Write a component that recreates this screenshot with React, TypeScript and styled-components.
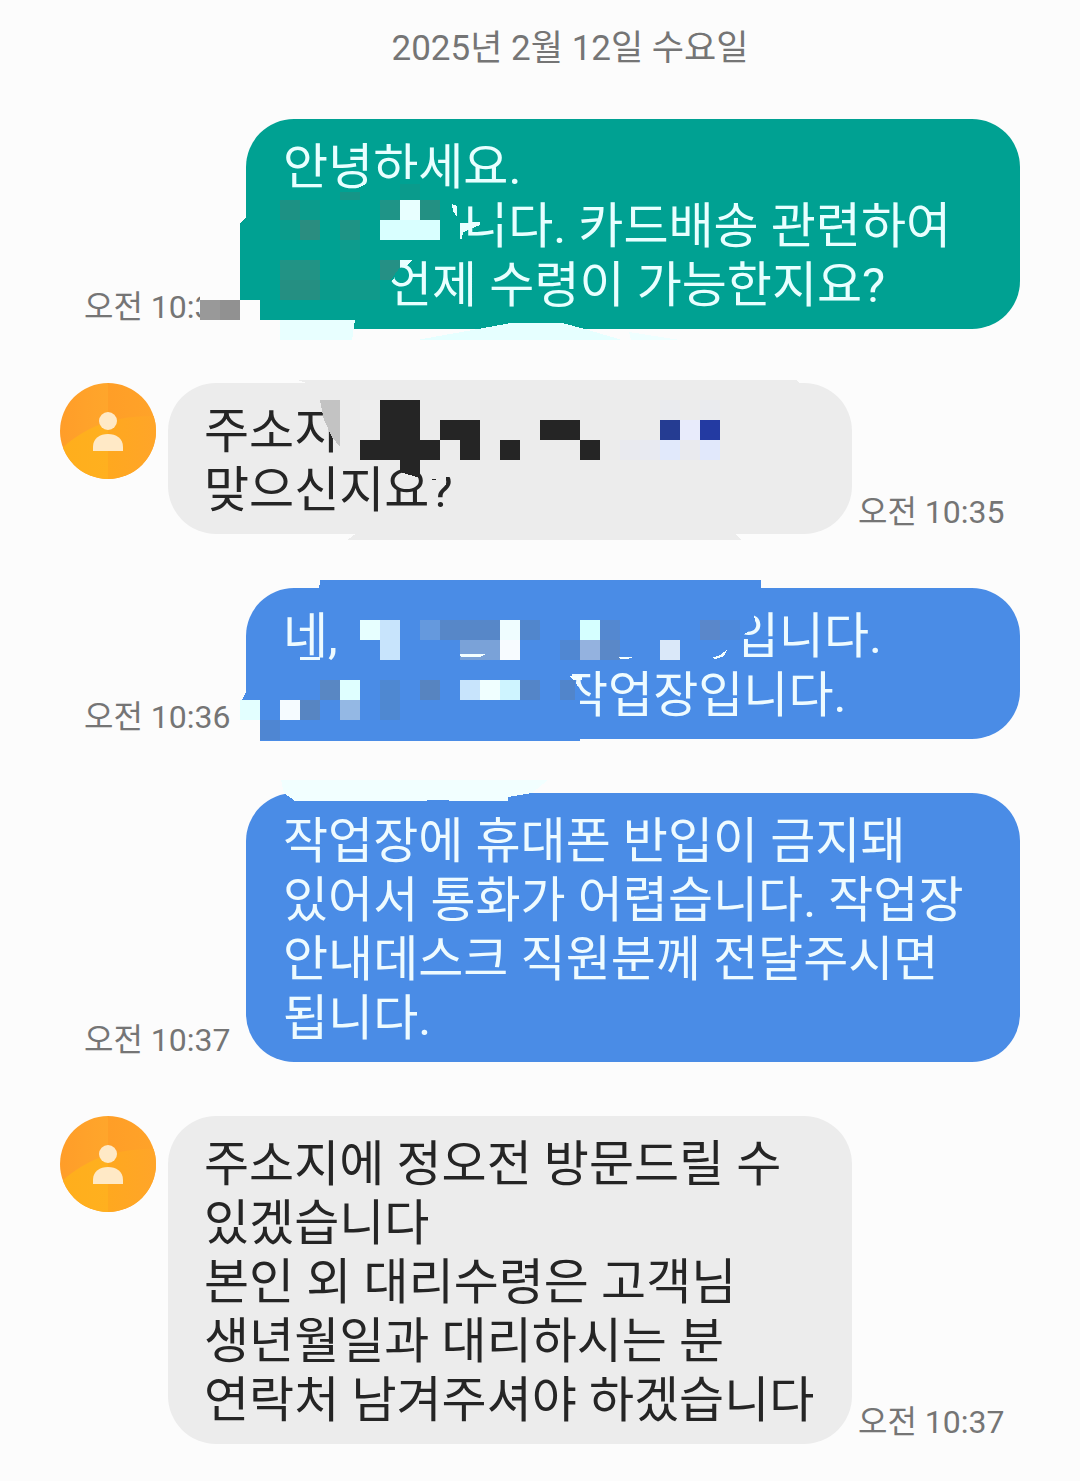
import React from "react";
import styled, { createGlobalStyle } from "styled-components";

const GlobalStyle = createGlobalStyle`
  *, *::before, *::after { box-sizing: border-box; }
  body {
    margin: 0;
    background: #fcfcfc;
    font-family: Roboto, "Noto Sans CJK KR", sans-serif;
  }
`;

type Tone = "teal" | "blue" | "gray";
const tones: Record<Tone, { fill: string; ink: string }> = {
  teal: { fill: "#00a192", ink: "#e8ffff" },
  blue: { fill: "#4a8ce6", ink: "#eefbff" },
  gray: { fill: "#ececec", ink: "#252525" },
};
const PAGE = "#fcfcfc";

const Chat = styled.main`
  padding: 25px 60px 38px;
`;

const DateHeading = styled.h1`
  margin: 0 0 46px;
  padding-left: 60px;
  color: #757575;
  font-size: 35px;
  font-weight: 400;
  line-height: 48px;
  text-align: center;
`;

const Thread = styled.ol`
  display: flex;
  flex-direction: column;
  gap: 54px;
  margin: 0;
  padding: 0;
  list-style: none;
`;

const Row = styled.li<{ $outgoing: boolean }>`
  display: flex;
  align-items: flex-end;
  flex-direction: ${(p) => (p.$outgoing ? "row-reverse" : "row")};
  gap: ${(p) => (p.$outgoing ? 12 : 6)}px;
  padding: ${(p) => (p.$outgoing ? "0 0 0 24px" : "0 12px 0 0")};
`;

const AvatarIcon = styled.svg`
  flex: none;
  align-self: flex-start;
  width: 96px;
  height: 96px;
  margin-right: 6px;
`;

const Bubble = styled.div<{ $tone: Tone }>`
  position: relative;
  flex: 1;
  min-width: 0;
  padding: 19px 36px 14px ${(p) => (p.$tone === "gray" ? 36 : 37)}px;
  border-radius: 48px;
  background: ${(p) => tones[p.$tone].fill};
  color: ${(p) => tones[p.$tone].ink};
`;

const Line = styled.p`
  margin: 0;
  font-size: 49px;
  font-weight: 400;
  line-height: 59px;
  white-space: nowrap;
`;

const Redacted = styled.span<{ $width: number }>`
  display: inline-block;
  width: ${(p) => p.$width}px;
`;

const Time = styled.time`
  flex: none;
  width: 150px;
  padding-bottom: 2px;
  color: #757575;
  font-size: 32px;
  line-height: 40px;
  white-space: nowrap;
`;

const MosaicLayer = styled.svg`
  position: absolute;
  top: 0;
  left: 0;
  overflow: visible;
  pointer-events: none;
`;

/* x, y, width, height, colour */
type Cell = [number, number, number, number, string];
const Cells = ({ items }: { items: Cell[] }) => (
  <>
    {items.map(([x, y, w, h, fill], i) => (
      <rect key={i} x={x} y={y} width={w} height={h} fill={fill} />
    ))}
  </>
);

const Mosaic = ({ box, children }: { box: [number, number, number, number]; children: React.ReactNode }) => (
  <MosaicLayer viewBox={box.join(" ")} width={box[2]} height={box[3]} shapeRendering="crispEdges" aria-hidden="true">
    {children}
  </MosaicLayer>
);

const Avatar = ({ id }: { id: string }) => (
  <AvatarIcon viewBox="0 0 96 96" role="img" aria-label="상대방">
    <defs>
      <linearGradient id={`${id}-top`} x1="0" x2="1">
        <stop offset="0" stopColor="#ff9d29" />
        <stop offset="0.5" stopColor="#ffa62b" />
        <stop offset="0.5" stopColor="#ff9e27" />
        <stop offset="1" stopColor="#ffa329" />
      </linearGradient>
      <linearGradient id={`${id}-low`} x1="0" x2="1">
        <stop offset="0" stopColor="#ffae1c" />
        <stop offset="0.5" stopColor="#ffb01f" />
        <stop offset="0.5" stopColor="#ffa81f" />
        <stop offset="1" stopColor="#ffa529" />
      </linearGradient>
      <clipPath id={`${id}-clip`}>
        <circle cx="48" cy="48" r="48" />
      </clipPath>
    </defs>
    <g clipPath={`url(#${id}-clip)`}>
      <rect width="96" height="96" fill={`url(#${id}-top)`} />
      <path d="M0 67 C20 48 48 32 96 33 V96 H0Z" fill={`url(#${id}-low)`} />
    </g>
    <circle cx="48" cy="38" r="9" fill="#ffe9c6" />
    <path d="M33 68 V64 C33 55 40 51 48 51 S63 55 63 64 V68Z" fill="#ffe9c6" />
  </AvatarIcon>
);

const GreetingMosaic = () => {
  const base = tones.teal.fill;
  return (
    <Mosaic box={[246, 119, 774, 210]}>
      <path d="M246 217 L240 224 V300 H260 V320 H300 V217Z" fill={base} />
      <path d="M200 280 H240 V320 H202 L201 306 L200 300Z" fill={PAGE} />
      <path d="M240 300 H260 V320 H355 L353 330 H240Z" fill={PAGE} />
      <path d="M280 320 H355 L352 340 H280Z" fill="#e8ffff" />
      <path d="M352 191 L366 184 L373 179 H411 V193 H352Z" fill={base} />
      <path d="M415 198 H462 V248 H415Z" fill={base} />
      <path d="M384 258 H400 V270 L391 282 H384Z" fill={base} />
      <Cells
        items={[
          [200, 300, 20, 20, "#999999"],
          [220, 300, 20, 20, "#919191"],
          [280, 200, 20, 20, "#1d9184"],
          [300, 200, 20, 20, "#0b9b8c"],
          [280, 220, 20, 20, "#0a9c8c"],
          [300, 220, 20, 20, "#2a8d80"],
          [340, 192, 20, 8, "#159587"],
          [340, 220, 20, 20, "#1e9385"],
          [340, 240, 20, 20, "#0d9c8d"],
          [280, 260, 40, 20, "#229385"],
          [280, 280, 40, 20, "#258f82"],
          [320, 280, 20, 20, "#0a9b8c"],
          [340, 280, 40, 20, "#109a8b"],
          [400, 184, 20, 16, "#0a9b8c"],
          [380, 200, 20, 20, "#1f9487"],
          [400, 200, 20, 20, "#e8ffff"],
          [420, 200, 20, 20, "#239083"],
          [380, 220, 60, 20, "#d9ffff"],
          [495, 218, 8, 6, base],
        ]}
      />
      <path d="M380 260 H400 V267 L391 280 H380Z" fill="#259085" />
      <path d="M400 260 H412 L405 267 H400Z M452 204 L457 206 V217 L453 211Z M460 223 L480 222 V225 L466 231 L463 232 L462 239 H460Z" fill="#e8ffff" />
      <path d="M417 340 L478 329 L511 323 H562 L585 329 L622 340Z" fill="#e6ffff" />
      <path d="M629 332 L680 340 H631Z" fill="#efffff" />
    </Mosaic>
  );
};

const AddressMosaic = () => {
  const base = tones.gray.fill;
  return (
    <Mosaic box={[168, 383, 684, 151]}>
      <path d="M298 380 H797 L799 383 V390 H320 L306 383Z M357 533 L347 540 H742 L734 533Z" fill={base} />
      <path d="M320 400 H340 V447 L332 437 L324 420Z" fill="#c3c3c3" />
      <path d="M428 462 H456 V477 H446 V485 H428Z" fill={base} />
      <rect x="432" y="479" width="4" height="1" fill="#252525" />
      <Cells
        items={[
          [380, 400, 40, 40, "#252525"],
          [360, 440, 80, 20, "#252525"],
          [440, 420, 40, 20, "#252525"],
          [460, 440, 20, 20, "#252525"],
          [500, 440, 20, 20, "#252525"],
          [540, 420, 40, 20, "#252525"],
          [580, 440, 20, 20, "#252525"],
          [360, 400, 20, 20, "#eeeeee"],
          [480, 400, 20, 20, "#ebebeb"],
          [580, 400, 20, 20, "#ebebeb"],
          [660, 400, 20, 20, "#eaebee"],
          [700, 400, 20, 20, "#eaebee"],
          [620, 440, 20, 20, "#e9eaef"],
          [640, 440, 20, 20, "#e8eaf1"],
          [660, 420, 20, 20, "#253c92"],
          [680, 420, 20, 20, "#e8ebfb"],
          [700, 420, 20, 20, "#233aa2"],
          [660, 440, 20, 20, "#e1e9fb"],
          [680, 440, 20, 20, "#e9eaee"],
          [700, 440, 20, 20, "#e1e8fb"],
        ]}
      />
      <path d="M400 460 H420 V478 L400 472Z" fill="#252525" />
    </Mosaic>
  );
};

const WorkplaceMosaic = () => {
  const base = tones.blue.fill;
  return (
    <Mosaic box={[246, 588, 774, 151]}>
      <path d="M320 580 H761 V590 H319Z M246 692 L242 700 H262 V692Z" fill={base} />
      <rect x="240" y="720" width="20" height="21" fill={PAGE} />
      <path d="M260 700 H300 V735 H580 V741 H260Z" fill={base} />
      <path d="M736 610 H753 L755 620 L752 629 L743 635 H736Z" fill={base} />
      <path d="M558 670 H569 L575 680 L580 692 V722 H558Z" fill={base} />
      <Cells
        items={[
          [240, 700, 20, 20, "#e3ffff"],
          [360, 620, 20, 20, "#e7ffff"],
          [380, 620, 20, 40, "#c8e4fc"],
          [420, 620, 20, 20, "#6599dd"],
          [440, 620, 60, 20, "#5787c8"],
          [460, 640, 40, 20, "#7aa2d8"],
          [500, 620, 20, 20, "#effdff"],
          [500, 640, 20, 20, "#f7fbff"],
          [520, 620, 20, 20, "#5186cc"],
          [580, 620, 20, 20, "#d5ffff"],
          [600, 620, 20, 20, "#5488d0"],
          [560, 640, 20, 20, "#5087d2"],
          [580, 640, 20, 20, "#94b2df"],
          [600, 640, 20, 20, "#5a88c8"],
          [660, 640, 20, 20, "#dae8f9"],
          [700, 620, 20, 20, "#5a87ca"],
          [720, 620, 20, 20, "#4e89da"],
          [320, 680, 20, 20, "#5987c3"],
          [340, 680, 20, 20, "#dfffff"],
          [380, 680, 20, 40, "#4f88d1"],
          [420, 680, 20, 20, "#5784c0"],
          [460, 680, 20, 20, "#c8e4fc"],
          [480, 680, 20, 20, "#f0ffff"],
          [500, 680, 20, 20, "#cef4ff"],
          [520, 680, 20, 20, "#5485c8"],
          [560, 680, 15, 20, "#5185cb"],
          [280, 700, 20, 20, "#f5fbff"],
          [300, 700, 20, 20, "#5785c2"],
          [340, 700, 20, 20, "#94b8e4"],
          [260, 720, 20, 20, "#4f86d2"],
          [300, 657, 20, 3, "#eefbff"],
        ]}
      />
      <path
        d="M460 654 H486 L480 657 H461Z M618 657 H633 L628 659 H621Z M711 658 L720 655 L727 650 L724 656 L716 659Z M569 676 H582 V680 H573Z"
        fill="#f4ffff"
      />
    </Mosaic>
  );
};

const NoticeMosaic = () => (
  <Mosaic box={[246, 793, 774, 269]}>
    <path d="M281 780 H548 L532 793 L508 797 V801 H449 V800 H427 V801 H295 L284 793Z" fill="#f2ffff" />
  </Mosaic>
);

interface Message {
  id: string;
  tone: Tone;
  time: string;
  dateTime: string;
  lines: React.ReactNode[];
  mosaic?: React.ReactNode;
}

const messages: Message[] = [
  {
    id: "greeting",
    tone: "teal",
    time: "오전 10:34",
    dateTime: "2025-02-12T10:34",
    lines: [
      "안녕하세요.",
      <><Redacted $width={135} />입니다. 카드배송 관련하여</>,
      <><Redacted $width={104} />언제 수령이 가능한지요?</>,
    ],
    mosaic: <GreetingMosaic />,
  },
  {
    id: "address",
    tone: "gray",
    time: "오전 10:35",
    dateTime: "2025-02-12T10:35",
    lines: ["주소지", "맞으신지요?"],
    mosaic: <AddressMosaic />,
  },
  {
    id: "workplace",
    tone: "blue",
    time: "오전 10:36",
    dateTime: "2025-02-12T10:36",
    lines: [
      <>네,<Redacted $width={396} />입니다.</>,
      <><Redacted $width={280} />작업장입니다.</>,
    ],
    mosaic: <WorkplaceMosaic />,
  },
  {
    id: "notice",
    tone: "blue",
    time: "오전 10:37",
    dateTime: "2025-02-12T10:37",
    lines: [
      "작업장에 휴대폰 반입이 금지돼",
      "있어서 통화가 어렵습니다. 작업장",
      "안내데스크 직원분께 전달주시면",
      "됩니다.",
    ],
    mosaic: <NoticeMosaic />,
  },
  {
    id: "visit",
    tone: "gray",
    time: "오전 10:37",
    dateTime: "2025-02-12T10:37",
    lines: [
      "주소지에 정오전 방문드릴 수",
      "있겠습니다",
      "본인 외 대리수령은 고객님",
      "생년월일과 대리하시는 분",
      "연락처 남겨주셔야 하겠습니다",
    ],
  },
];

export default function App() {
  return (
    <>
      <GlobalStyle />
      <Chat lang="ko">
        <DateHeading>2025년 2월 12일 수요일</DateHeading>
        <Thread>
          {messages.map((m) => {
            const outgoing = m.tone !== "gray";
            return (
              <Row key={m.id} $outgoing={outgoing}>
                {!outgoing && <Avatar id={m.id} />}
                <Bubble $tone={m.tone}>
                  {m.lines.map((line, i) => (
                    <Line key={i}>{line}</Line>
                  ))}
                  {m.mosaic}
                </Bubble>
                <Time dateTime={m.dateTime}>{m.time}</Time>
              </Row>
            );
          })}
        </Thread>
      </Chat>
    </>
  );
}
